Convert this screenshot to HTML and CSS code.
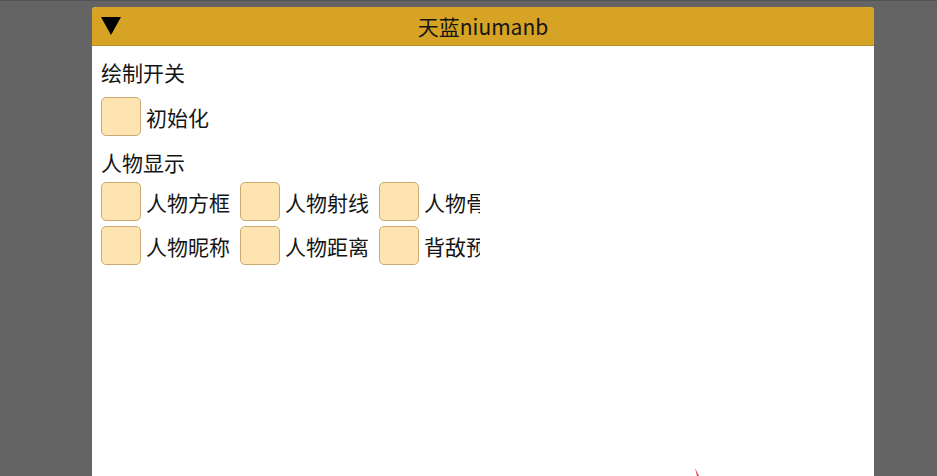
FILE: index.html
```html
<!DOCTYPE html>
<html lang="zh-CN">
<head>
    <meta charset="UTF-8">
    <meta name="viewport" content="width=device-width, initial-scale=1.0">
    <title>天蓝niumanb</title>
    <link rel="stylesheet" href="styles.css">
</head>
<body>
    <main class="window">
        <header class="title-bar">
            <button class="collapse-btn" type="button" aria-label="折叠">
                <svg width="20" height="18" viewBox="0 0 20 18"><path d="M0 0h20L10 18z"/></svg>
            </button>
            <h1>天蓝niumanb</h1>
        </header>

        <div class="window-body">
            <div class="column">
                <h2>绘制开关</h2>
                <div class="switches">
                    <label class="switch"><input type="checkbox">初始化</label>
                </div>

                <h2 class="display-title">人物显示</h2>
                <div class="switches">
                    <label class="switch"><input type="checkbox">人物方框</label>
                    <label class="switch"><input type="checkbox">人物射线</label>
                    <label class="switch"><input type="checkbox">人物骨骼</label>
                </div>
                <div class="switches">
                    <label class="switch"><input type="checkbox">人物昵称</label>
                    <label class="switch"><input type="checkbox">人物距离</label>
                    <label class="switch"><input type="checkbox">背敌预警</label>
                </div>
            </div>
        </div>

        <svg class="mark" width="6" height="8" viewBox="0 0 6 8"><path d="M1 0L5 8H3z"/></svg>
    </main>
</body>
</html>
```

FILE: styles.css
```css
:root {
    --page-color: #646464;
    --title-color: #d6a325;
    --box-color: #fee4b1;
    --box-border: #c9ab72;
    --text-color: #151515;
}

* {
    margin: 0;
    padding: 0;
    box-sizing: border-box;
}

body {
    font-family: "Noto Sans CJK SC", sans-serif;
    font-size: 21px;
    line-height: 28px;
    background-color: var(--page-color);
    color: var(--text-color);
    height: 100vh;
    display: flex;
    padding: 6px 63px 0 92px;
    border-top: 1px solid #535353;
    overflow: hidden;
}

.window {
    position: relative;
    flex: 1;
    min-width: 0;
    background-color: #fff;
    border-radius: 4px 4px 0 0;
}

.title-bar {
    display: grid;
    grid-template-columns: 20px 1fr 20px;
    align-items: center;
    height: 39px;
    padding: 0 9px;
    background-color: var(--title-color);
    border-bottom: 1px solid #b58c2c;
    border-radius: 4px 4px 0 0;
}

h1,
h2 {
    font-size: inherit;
    font-weight: 400;
}

h1 {
    text-align: center;
}

.collapse-btn {
    display: flex;
    border: none;
    background: none;
    cursor: pointer;
}

.window-body {
    display: grid;
    grid-template-columns: 1fr 1fr;
    gap: 6px;
    padding: 12px 9px;
}

.column {
    min-width: 0;
    overflow: hidden;
}

.display-title {
    margin-top: 12px;
}

.switches {
    display: flex;
    gap: 10px;
    margin-top: 5px;
}

h2 + .switches {
    margin-top: 11px;
}

.display-title + .switches {
    margin-top: 6px;
}

.switch {
    display: flex;
    flex-shrink: 0;
    align-items: center;
    gap: 5px;
    white-space: nowrap;
    cursor: pointer;
}

.switch input {
    appearance: none;
    width: 40px;
    height: 39px;
    background-color: var(--box-color);
    border: 1px solid var(--box-border);
    border-radius: 5px;
    cursor: pointer;
}

.switch input:checked {
    background-color: var(--title-color);
}

.mark {
    position: absolute;
    right: 174px;
    bottom: 0;
    fill: #d9434f;
}
```
